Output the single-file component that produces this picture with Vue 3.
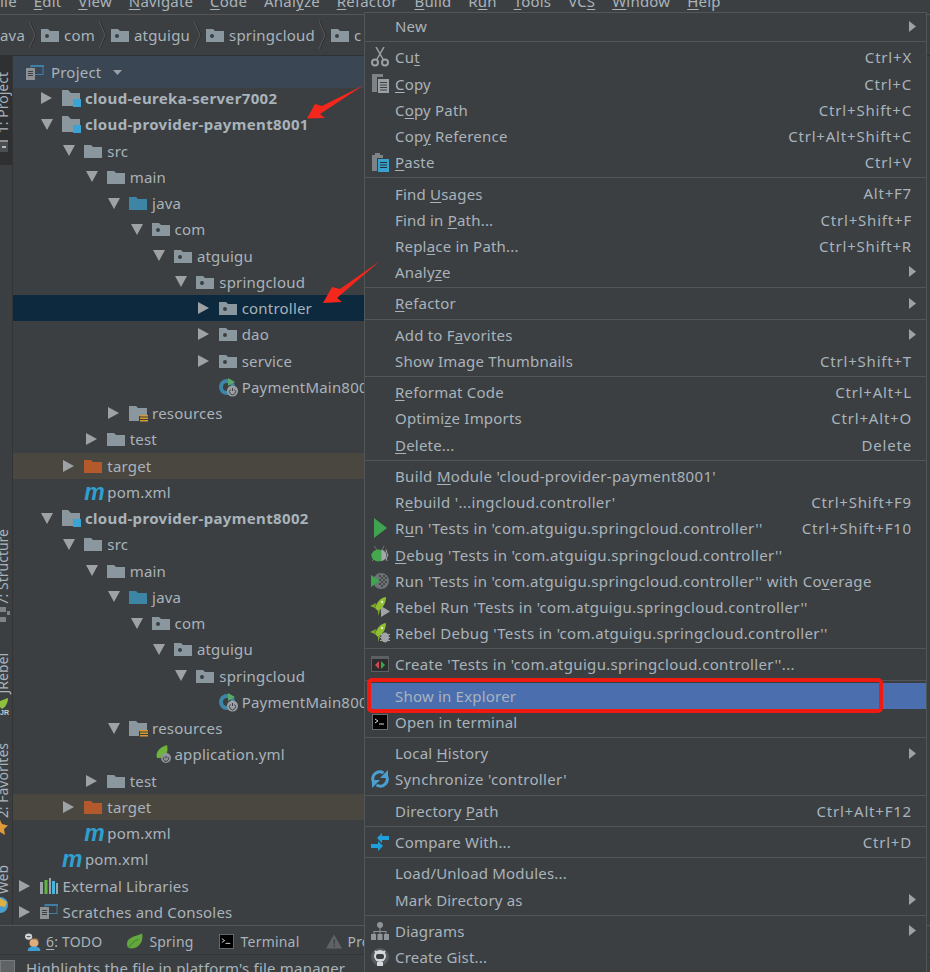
<script setup>
const menubar = [
  ['', '', 'ile'], ['', 'E', 'dit'], ['', 'V', 'iew'], ['', 'N', 'avigate'], ['', 'C', 'ode'],
  ['Anal', 'y', 'ze'], ['', 'R', 'efactor'], ['', 'B', 'uild'], ['R', 'u', 'n'], ['', 'T', 'ools'],
  ['VC', 'S', ''], ['', 'W', 'indow'], ['', 'H', 'elp'],
]
const crumbs = ['com', 'atguigu', 'springcloud', 'c']
const tree = [
  { d: 1, a: 'r', i: 'mod', t: 'cloud-eureka-server7002', b: 1 },
  { d: 1, a: 'd', i: 'mod', t: 'cloud-provider-payment8001', b: 1 },
  { d: 2, a: 'd', i: 'dir', t: 'src' },
  { d: 3, a: 'd', i: 'dir', t: 'main' },
  { d: 4, a: 'd', i: 'src', t: 'java' },
  { d: 5, a: 'd', i: 'pkg', t: 'com' },
  { d: 6, a: 'd', i: 'pkg', t: 'atguigu' },
  { d: 7, a: 'd', i: 'pkg', t: 'springcloud' },
  { d: 8, a: 'r', i: 'pkg', t: 'controller', sel: 1 },
  { d: 8, a: 'r', i: 'pkg', t: 'dao' },
  { d: 8, a: 'r', i: 'pkg', t: 'service' },
  { d: 8, a: '', i: 'boot', t: 'PaymentMain8001' },
  { d: 4, a: 'r', i: 'res', t: 'resources' },
  { d: 3, a: 'r', i: 'dir', t: 'test' },
  { d: 2, a: 'r', i: 'tgt', t: 'target', ex: 1 },
  { d: 2, a: '', i: 'm', t: 'pom.xml' },
  { d: 1, a: 'd', i: 'mod', t: 'cloud-provider-payment8002', b: 1 },
  { d: 2, a: 'd', i: 'dir', t: 'src' },
  { d: 3, a: 'd', i: 'dir', t: 'main' },
  { d: 4, a: 'd', i: 'src', t: 'java' },
  { d: 5, a: 'd', i: 'pkg', t: 'com' },
  { d: 6, a: 'd', i: 'pkg', t: 'atguigu' },
  { d: 7, a: 'd', i: 'pkg', t: 'springcloud' },
  { d: 8, a: '', i: 'boot', t: 'PaymentMain8002' },
  { d: 4, a: 'd', i: 'res', t: 'resources' },
  { d: 5, a: '', i: 'yml', t: 'application.yml' },
  { d: 3, a: 'r', i: 'dir', t: 'test' },
  { d: 2, a: 'r', i: 'tgt', t: 'target', ex: 1 },
  { d: 2, a: '', i: 'm', t: 'pom.xml' },
  { d: 1, a: '', i: 'm', t: 'pom.xml' },
  { d: 0, a: 'r', i: 'lib', t: 'External Libraries' },
  { d: 0, a: 'r', i: 'scr', t: 'Scratches and Consoles' },
]
const menu = [
  [{ p: '', u: '', s: 'New', arrow: 1 }],
  [
    { p: 'Cu', u: 't', s: '', k: 'Ctrl+X', i: 'cut' },
    { p: '', u: 'C', s: 'opy', k: 'Ctrl+C', i: 'copy' },
    { p: 'C', u: 'o', s: 'py Path', k: 'Ctrl+Shift+C' },
    { p: 'Cop', u: 'y', s: ' Reference', k: 'Ctrl+Alt+Shift+C' },
    { p: '', u: 'P', s: 'aste', k: 'Ctrl+V', i: 'paste' },
  ],
  [
    { p: 'Find ', u: 'U', s: 'sages', k: 'Alt+F7' },
    { p: 'Find in ', u: 'P', s: 'ath...', k: 'Ctrl+Shift+F' },
    { p: 'Repl', u: 'a', s: 'ce in Path...', k: 'Ctrl+Shift+R' },
    { p: 'Analy', u: 'z', s: 'e', arrow: 1 },
  ],
  [{ p: '', u: 'R', s: 'efactor', arrow: 1 }],
  [
    { p: 'Add to F', u: 'a', s: 'vorites', arrow: 1 },
    { p: 'Show Image Thumbnails', u: '', s: '', k: 'Ctrl+Shift+T' },
  ],
  [
    { p: '', u: 'R', s: 'eformat Code', k: 'Ctrl+Alt+L' },
    { p: 'Optimi', u: 'z', s: 'e Imports', k: 'Ctrl+Alt+O' },
    { p: '', u: 'D', s: 'elete...', k: 'Delete' },
  ],
  [
    { p: 'Build ', u: 'M', s: "odule 'cloud-provider-payment8001'" },
    { p: 'R', u: 'e', s: "build '...ingcloud.controller'", k: 'Ctrl+Shift+F9' },
    { p: 'R', u: 'u', s: "n 'Tests in 'com.atguigu.springcloud.controller''", k: 'Ctrl+Shift+F10', i: 'run' },
    { p: '', u: 'D', s: "ebug 'Tests in 'com.atguigu.springcloud.controller''", i: 'debug' },
    { p: "Run 'Tests in 'com.atguigu.springcloud.controller'' with Co", u: 'v', s: 'erage', i: 'cover' },
    { p: "Rebel Run 'Tests in 'com.atguigu.springcloud.controller''", u: '', s: '', i: 'rebelrun' },
    { p: "Rebel Debug 'Tests in 'com.atguigu.springcloud.controller''", u: '', s: '', i: 'rebeldebug' },
  ],
  [{ p: "Create 'Tests in 'com.atguigu.springcloud.controller''...", u: '', s: '', i: 'create' }],
  [
    { p: 'Show in Explorer', u: '', s: '', hot: 1 },
    { p: 'Open in terminal', u: '', s: '', i: 'term' },
  ],
  [
    { p: 'Local ', u: 'H', s: 'istory', arrow: 1 },
    { p: "Synchronize 'controller'", u: '', s: '', i: 'sync', long: 1 },
  ],
  [{ p: 'Directory ', u: 'P', s: 'ath', k: 'Ctrl+Alt+F12' }],
  [{ p: 'Compare With...', u: '', s: '', k: 'Ctrl+D', i: 'compare' }],
  [
    { p: 'Load/Unload Modules...', u: '', s: '' },
    { p: 'Mark Directory as', u: '', s: '', arrow: 1 },
  ],
  [
    { p: 'Diagrams', u: '', s: '', arrow: 1, i: 'diagram' },
    { p: 'Create Gist...', u: '', s: '', i: 'gist' },
  ],
]
const isLong = (m) => m.long || (m.p + m.s).length > 30
</script>

<template>
  <div class="ide">
    <div class="menubar">
      <span v-for="(m, i) in menubar" :key="i" class="mb-item">{{ m[0] }}<u>{{ m[1] }}</u>{{ m[2] }}</span>
    </div>

    <div class="crumbs">
      <span class="crumb first">ava</span>
      <template v-for="c in crumbs" :key="c">
        <svg class="chev" width="8" height="40" viewBox="0 0 8 40"><path d="M1 6 L7 20 L1 34" fill="none" stroke="#2b2d2e" stroke-width="1" /><path d="M0 6 L6 20 L0 34" fill="none" stroke="#55585a" stroke-width="1" /></svg>
        <span class="crumb">
          <svg width="18" height="14" viewBox="0 0 18 14"><path d="M0 1h7l2 2h9v11H0z" fill="#8b979f" /><circle cx="6" cy="8" r="2" fill="#3c3f41" /></svg>
          {{ c }}
        </span>
      </template>
    </div>

    <div class="body">
      <aside class="rail">
        <div class="rail-active">
          <span class="vtext vt-project"><u>1</u>: Project</span>
          <svg class="rail-ico" width="8" height="12" viewBox="0 0 8 12"><path d="M0 0h8v12H0z" fill="#4b4e50" /><path d="M0 0h8v2H0z" fill="#8a8e91" /><path d="M2 6h4v2H2z" fill="#b5b9bc" /></svg>
        </div>
        <span class="vtext vt-structure"><u>7</u>: Structure</span>
        <svg class="rail-struct" width="10" height="16" viewBox="0 0 10 16"><path d="M0 0h6v5H0zM0 10h6v5H0zM7 4h3v4H7z" fill="#7d8387" /></svg>
        <span class="vtext vt-rebel">JRebel</span>
        <svg class="rail-rocket" width="12" height="18" viewBox="0 0 12 18"><path d="M8 0 C8 4 6 9 2 11 L0 9 V3 C3 2 5 1 8 0z" fill="#8fbf3f" /><text x="0" y="17" font-size="7" font-weight="700" fill="#c8cdd0" font-family="Liberation Sans">JR</text></svg>
        <span class="vtext vt-fav"><u>2</u>: Favorites</span>
        <svg class="rail-star" width="8" height="16" viewBox="0 0 8 16"><path d="M0 0 L2 4 L8 5.500 L4 9 L5 15 L0 12z" fill="#e09a3a" /></svg>
        <span class="vtext vt-web">Web</span>
        <svg class="rail-globe" width="8" height="16" viewBox="0 0 8 16"><circle cx="0" cy="8" r="8" fill="#4a9fd0" /><path d="M0 1 L7 5 L5 10 L0 9z" fill="#e0b040" /></svg>
      </aside>

      <section class="project">
        <header class="proj-head">
          <svg class="ph-ico" width="18" height="15" viewBox="0 0 18 15"><rect x="5" y="0.5" width="12" height="9" fill="none" stroke="#3c7fa8" /><path d="M5 0h13v2H5z" fill="#3c7fa8" /><path d="M0 3h9v12H0z" fill="#8b9194" /><path d="M2 6h5v1H2zM2 8h5v1H2zM2 10h5v1H2z" fill="#3c3f41" /></svg>
          <span class="ph-title">Project</span>
          <svg class="ph-caret" width="9" height="5" viewBox="0 0 9 5"><path d="M0 0h9L4.500 5z" fill="#9aa0a4" /></svg>
        </header>

        <div class="tree">
          <div
            v-for="(r, i) in tree"
            :key="i"
            class="row"
            :class="{ sel: r.sel, ex: r.ex }"
          >
            <span class="indent" :style="{ width: (r.d * 22.4) + 'px' }"></span>
            <span class="arrow">
              <svg v-if="r.a === 'r'" width="11" height="12" viewBox="0 0 11 12"><path d="M0 0 L11 6 L0 12z" fill="#9ea2a5" /></svg>
              <svg v-else-if="r.a === 'd'" width="12" height="11" viewBox="0 0 12 11"><path d="M0 0 H12 L6 11z" fill="#9ea2a5" /></svg>
            </span>
            <span class="ico">
              <svg v-if="r.i === 'mod'" width="19" height="18" viewBox="0 0 19 18"><path d="M0 1h6l3 3h9v6h-7v7H0z" fill="#8b979f" /><rect x="11" y="10" width="8" height="8" fill="#3aa5d5" /></svg>
              <svg v-else-if="r.i === 'dir'" width="18" height="14" viewBox="0 0 18 14"><path d="M0 1h7l2 2h9v11H0z" fill="#8b979f" /></svg>
              <svg v-else-if="r.i === 'src'" width="18" height="14" viewBox="0 0 18 14"><path d="M0 1h7l2 2h9v11H0z" fill="#3d85a5" /></svg>
              <svg v-else-if="r.i === 'tgt'" width="18" height="14" viewBox="0 0 18 14"><path d="M0 1h7l2 2h9v11H0z" fill="#b4592b" /></svg>
              <svg v-else-if="r.i === 'pkg'" width="18" height="14" viewBox="0 0 18 14"><path d="M0 1h7l2 2h9v11H0z" fill="#8b979f" /><circle cx="6" cy="8" r="2" fill="#3c3f41" /></svg>
              <svg v-else-if="r.i === 'res'" width="19" height="17" viewBox="0 0 19 17"><path d="M0 1h7l2 2h9v8h-8v5H0z" fill="#8b979f" /><path d="M11 10h8v1.500h-8zM11 12.500h8v1.500h-8zM11 15h8v1.500h-8z" fill="#d69a2d" /></svg>
              <svg v-else-if="r.i === 'boot'" width="20" height="20" viewBox="0 0 20 20"><circle cx="8" cy="10" r="8" fill="#3c86a8" /><circle cx="8" cy="10" r="4" fill="#3c3f41" /><path d="M9 1 L16 5 L9 9z" fill="#59a869" /><circle cx="13.500" cy="14" r="5.500" fill="#9aa0a4" /><path d="M13.500 11v3M11.500 12.500a3 3 0 1 0 4 0" fill="none" stroke="#3c3f41" stroke-width="1" /></svg>
              <svg v-else-if="r.i === 'yml'" width="20" height="20" viewBox="0 0 20 20"><path d="M15 1 C17 9 13 15 5 14 C3 8 8 3 15 1z" fill="#6fb33f" /><circle cx="14" cy="14" r="5" fill="#8f9498" /><path d="M14 12v2.500M12.200 12.800a2.600 2.600 0 1 0 3.600 0" fill="none" stroke="#3c3f41" /></svg>
              <span v-else-if="r.i === 'm'" class="m-ico">m</span>
              <svg v-else-if="r.i === 'lib'" width="18" height="16" viewBox="0 0 18 16"><path d="M0 4h3v12H0z" fill="#9aa5a8" /><path d="M4.500 2h3v14h-3z" fill="#62b543" /><path d="M9 0h2v16H9z" fill="#9aa5a8" /><path d="M12 3h3v13h-3z" fill="#40b6e0" /><path d="M16 5h2v11h-2z" fill="#9aa5a8" /></svg>
              <svg v-else width="18" height="15" viewBox="0 0 18 15"><rect x="5" y="0.500" width="12" height="9" fill="none" stroke="#3c7fa8" /><path d="M5 0h13v2H5z" fill="#3c7fa8" /><path d="M0 3h9v12H0z" fill="#8b9194" /><path d="M2 6h5v1H2zM2 8h5v1H2zM2 10h5v1H2z" fill="#3c3f41" /></svg>
            </span>
            <span class="label" :class="{ bold: r.b }">{{ r.t }}</span>
          </div>
        </div>
      </section>
    </div>

    <div class="toolbar">
      <span class="tool tool-todo">
        <svg width="18" height="20" viewBox="0 0 20 20"><circle cx="10" cy="11" r="5" fill="#e0ac7a" /><path d="M3 20c0-4 3-5 7-5s7 1 7 5z" fill="#3f9fd4" /><path d="M4 9c0-5 12-5 12 0l-2-2H6z" fill="#6b5a47" /><ellipse cx="4" cy="4" rx="4" ry="3.500" fill="#d0d3d5" /><path d="M2 4h4" stroke="#3c3f41" /></svg>
        <span><u>6</u>: TODO</span>
      </span>
      <span class="tool tool-spring">
        <svg width="16" height="17" viewBox="0 0 17 17"><path d="M16 0 C18 9 12 16 4 16 C1 16 0 14 0 11 C0 4 9 3 16 0z" fill="#62a83d" /><path d="M2 15 C5 10 8 8 12 6" fill="none" stroke="#3c7a27" /></svg>
        <span>Spring</span>
      </span>
      <span class="tool tool-term">
        <svg width="15" height="15" viewBox="0 0 16 16"><rect width="16" height="16" fill="#6b6e70" /><rect x="1" y="1" width="14" height="14" fill="#000" /><path d="M3 5l3 2-3 2" fill="none" stroke="#d8d8d8" /><path d="M7 10h5" stroke="#d8d8d8" /></svg>
        <span>Terminal</span>
      </span>
      <span class="tool tool-prob">
        <svg width="16" height="15" viewBox="0 0 17 15"><path d="M8.500 0 L17 15 H0z" fill="#606365" /><path d="M8 5h1.500v5H8zM8 11h1.500v2H8z" fill="#3c3f41" /></svg>
        <span>Problems</span>
      </span>
    </div>

    <footer class="status">
      <span class="st-box"></span>
      <span class="st-text">Highlights the file in platform's file manager</span>
    </footer>

    <nav class="menu">
      <div v-for="(g, gi) in menu" :key="gi" class="group">
        <div v-for="(m, mi) in g" :key="mi" class="item" :class="{ hot: m.hot }">
          <span class="mi">
            <svg v-if="m.i === 'cut'" width="18" height="20" viewBox="0 0 18 20"><circle cx="4" cy="15.500" r="3" fill="none" stroke="#9aa0a4" stroke-width="2" /><circle cx="14" cy="15.500" r="3" fill="none" stroke="#9aa0a4" stroke-width="2" /><path d="M5.500 13 L13 0 M12.500 13 L5 0" stroke="#9aa0a4" stroke-width="1.500" /></svg>
            <svg v-else-if="m.i === 'copy'" width="18" height="19" viewBox="0 0 18 19"><path d="M1 0h11v3H6v15H1z" fill="#7d8386" /><path d="M7 5h11v14H7z" fill="#9aa0a4" /><path d="M9 8h7v1H9zM9 10.500h7v1H9zM9 13h7v1H9zM9 15.500h7v1H9z" fill="#3c3f41" /></svg>
            <svg v-else-if="m.i === 'paste'" width="18" height="19" viewBox="0 0 18 19"><path d="M1 2h3V0h5v2h3v3H6v13H1z" fill="#7d8386" /><path d="M7 6h11v13H7z" fill="#3aa0cc" /><path d="M9 9h7v1H9zM9 11.500h7v1H9zM9 14h7v1H9z" fill="#20303a" /></svg>
            <svg v-else-if="m.i === 'run'" width="13" height="20" viewBox="0 0 13 20"><path d="M0 0 L13 10 L0 20z" fill="#3ea44f" /></svg>
            <svg v-else-if="m.i === 'debug'" width="18" height="18" viewBox="0 0 18 18"><path d="M3 0l3 4M13 0l-2 4M0 9h2M16 9h2M1 15l3-3M17 15l-3-3" stroke="#70757a" /><path d="M15 3.500 Q18 9 15 14.500" fill="none" stroke="#a4a8ab" /><ellipse cx="7.500" cy="9.500" rx="7" ry="6" fill="#46a84e" /><path d="M10.500 3.800a7 6 0 0 1 0 11.400z" fill="#a4a8ab" /></svg>
            <svg v-else-if="m.i === 'cover'" width="18" height="18" viewBox="0 0 18 18"><circle cx="10" cy="9" r="8" fill="#6e7376" /><path d="M4 3h1v1H4zM8 3h2v2H8zM12 3h2v2h-2zM10 5h2v2h-2zM14 5h2v2h-2zM8 7h2v2H8zM12 7h2v2h-2zM10 9h2v2h-2zM14 9h2v2h-2zM8 11h2v2H8zM12 11h2v2h-2zM10 13h2v2h-2z" fill="#45484a" /><path d="M0 3 L9 9 L0 15z" fill="#3ea44f" /></svg>
            <svg v-else-if="m.i === 'rebelrun' || m.i === 'rebeldebug'" width="20" height="20" viewBox="0 0 20 20"><path d="M16 0 C16 6 13 11 8 14 L5 11 C7 5 10 1 16 0z" fill="#8fbf30" /><path d="M6 6 L0 9 L5 11zM8 14 L8 19 L11 11z" fill="#7fa826" /><circle cx="12" cy="5" r="1.200" fill="#dfe8c8" /><path v-if="m.i === 'rebelrun'" d="M11 9 L20 14.500 L11 20z" fill="#a0a4a8" /><g v-else fill="#a0a4a8"><ellipse cx="15" cy="14.500" rx="4" ry="5" /><path d="M10 11h10v1h-10zM10 14h10v1h-10zM10 17h10v1h-10z" /></g></svg>
            <svg v-else-if="m.i === 'create'" width="18" height="16" viewBox="0 0 18 16"><rect width="18" height="16" fill="#5c6063" /><rect x="1" y="3" width="16" height="12" fill="#2b2d2e" /><path d="M8 5 L4 9 L8 13z" fill="#d04b4b" /><path d="M10 5 L14 9 L10 13z" fill="#3ea44f" /></svg>
            <svg v-else-if="m.i === 'term'" width="16" height="16" viewBox="0 0 16 16"><rect width="16" height="16" fill="#6b6e70" /><rect x="1" y="1" width="14" height="14" fill="#000" /><path d="M3 5l3 2-3 2" fill="none" stroke="#d8d8d8" /><path d="M7 10h5" stroke="#d8d8d8" /></svg>
            <svg v-else-if="m.i === 'sync'" width="18" height="18" viewBox="0 0 18 18"><path d="M2.500 12 A7 7 0 0 1 12.500 3 M15.500 6 A7 7 0 0 1 5.500 15" fill="none" stroke="#4a9fd0" stroke-width="3" /><path d="M17 0V8H9zM1 18V10H9z" fill="#4a9fd0" /></svg>
            <svg v-else-if="m.i === 'compare'" width="18" height="18" viewBox="0 0 18 18"><path d="M11 0 V3 H18 V7 H11 V10 L6 5z" fill="#1f9fdc" /><path d="M7 8 V11 H0 V15 H7 V18 L12 13z" fill="#1f9fdc" /></svg>
            <svg v-else-if="m.i === 'diagram'" width="18" height="18" viewBox="0 0 18 18"><circle cx="9" cy="3" r="3" fill="#8f9498" /><path d="M8.500 5h1v4h-1zM2.500 9h13v1h-13zM2.500 9h1v3h-1zM8.500 9h1v3h-1zM14.500 9h1v3h-1z" fill="#8f9498" /><path d="M0 12h5v6H0zM6.500 12h5v6h-5zM13 12h5v6h-5z" fill="#8f9498" /></svg>
            <svg v-else-if="m.i === 'gist'" width="18" height="18" viewBox="0 0 18 18"><circle cx="9" cy="9" r="9" fill="#56595b" /><circle cx="9" cy="8" r="6" fill="#d6d8d9" /><path d="M4 3l2 2M14 3l-2 2" stroke="#d6d8d9" stroke-width="2" /><rect x="5" y="6" width="8" height="5" rx="2" fill="#3c3f41" /><path d="M6 14h6v4H6z" fill="#d6d8d9" /></svg>
          </span>
          <span class="lbl" :class="{ long: isLong(m) }">{{ m.p }}<u v-if="m.u">{{ m.u }}</u>{{ m.s }}</span>
          <span v-if="m.k" class="key">{{ m.k }}</span>
          <svg v-if="m.arrow" class="sub" width="7" height="11" viewBox="0 0 7 11"><path d="M0 0 L7 5.500 L0 11z" fill="#9ea2a5" /></svg>
        </div>
      </div>
    </nav>

    <div class="redbox"></div>
    <svg class="redarrow a1" width="60" height="44" viewBox="0 0 60 44"><path d="M59 0 L17 21 L10 19 L2 33.500 L20 33 L15 29z" fill="#f5261c" /></svg>
    <svg class="redarrow a2" width="62" height="48" viewBox="0 0 62 48"><path d="M61 1 L21 29 L13 27 L4 43 L23 42 L18 38z" fill="#f5261c" /></svg>
  </div>
</template>

<style>
html, body { margin: 0; background: #3c3f41; }
</style>

<style scoped>
.ide {
  position: relative;
  width: 930px;
  height: 972px;
  overflow: hidden;
  background: #3c3f41;
  color: #a9b3bb;
  font-family: "Noto Sans", "Open Sans", sans-serif;
  font-size: 15px;
  letter-spacing: 0.2px;
  display: flex;
  flex-direction: column;
}
u { text-underline-offset: 2px; text-decoration-thickness: 1px; }

.menubar {
  height: 15px;
  flex: none;
  overflow: hidden;
  display: flex;
  gap: 16.9px;
  line-height: 26px;
  border-bottom: 1px solid #555758;
  box-sizing: border-box;
}
.mb-item { flex: none; height: 26px; margin-top: -12px; }

.crumbs {
  height: 41px;
  flex: none;
  display: flex;
  align-items: center;
  gap: 4px;
  border-bottom: 1px solid #2f3132;
  box-sizing: border-box;
}
.crumb { display: inline-flex; align-items: center; gap: 5px; }

.body { flex: 1; min-height: 0; display: flex; border-bottom: 1px solid #555758; }
.rail {
  position: relative;
  width: 12px;
  flex: none;
  border-right: 1px solid #323435;
  overflow: hidden;
  letter-spacing: 0;
}
.rail-active { position: absolute; left: 0; top: 0; width: 12px; height: 109px; background: #2e3031; }
.vtext {
  position: absolute;
  left: -4px;
  writing-mode: vertical-rl;
  transform: rotate(180deg);
  font-size: 14px;
  line-height: 14px;
  white-space: nowrap;
}
.vt-project { top: 16px; }
.rail-ico { position: absolute; left: 0; top: 84px; }
.vt-structure { top: 473px; }
.rail-struct { position: absolute; left: 0; top: 551px; }
.vt-rebel { top: 597px; }
.rail-rocket { position: absolute; left: 0; top: 642px; }
.vt-fav { top: 687px; }
.rail-star { position: absolute; left: 0; top: 764px; }
.vt-web { top: 809px; }
.rail-globe { position: absolute; left: 0; top: 841px; }

.project { flex: none; width: 352px; display: flex; flex-direction: column; overflow: hidden; }
.proj-head {
  height: 32px;
  flex: none;
  background: #3b4654;
  display: flex;
  align-items: center;
  padding-left: 13px;
}
.ph-title { margin-left: 7px; }
.ph-caret { margin-left: 12px; }
.tree { flex: 1; min-height: 0; margin-top: -3px; }
.row { height: 26.25px; display: flex; align-items: center; white-space: nowrap; padding-left: 4.5px; }
.row.sel { background: #0d293e; }
.row.ex { background: #4a4740; }
.indent { flex: none; }
.arrow { width: 22px; flex: none; display: flex; align-items: center; padding-left: 1px; box-sizing: border-box; }
.ico { width: 23px; flex: none; display: flex; align-items: center; }
.label { line-height: 20px; }
.bold { font-weight: 700; letter-spacing: 0.35px; }
.m-ico {
  font-family: "Liberation Sans", sans-serif;
  font-style: italic;
  font-weight: 700;
  font-size: 23px;
  line-height: 20px;
  color: #2f9fd0;
}

.toolbar {
  height: 29px;
  flex: none;
  display: flex;
  align-items: center;
  padding-top: 3px;
  border-bottom: 1px solid #323435;
  box-sizing: border-box;
  font-size: 14px;
}
.tool { display: inline-flex; align-items: center; white-space: nowrap; flex: none; }
.tool-todo { margin-left: 25px; gap: 3px; }
.tool-spring { margin-left: 25px; gap: 6px; }
.tool-term { margin-left: 25px; gap: 7px; }
.tool-prob { margin-left: 27px; gap: 5px; }

.status { height: 17px; flex: none; overflow: hidden; display: flex; gap: 11px; align-items: flex-start; }
.st-box { width: 13px; height: 17px; margin-top: 5px; border: 1px solid #787a7c; background: #606365; flex: none; }
.st-text { line-height: 20px; margin-top: 3px; white-space: nowrap; }

.menu {
  position: absolute;
  left: 364px;
  top: 12px;
  width: 563px;
  bottom: -10px;
  background: #3c3f41;
  border-left: 1px solid #515658;
  border-right: 1px solid #515658;
  border-top: 1px solid #515658;
  box-sizing: border-box;
}
.group + .group { border-top: 1px solid #515658; margin-top: 2.15px; padding-top: 2px; }
.item { position: relative; height: 26.2px; display: flex; align-items: center; white-space: nowrap; }
.item.hot { background: #4b6eaf; margin-left: 3px; }
.item.hot .mi { width: 27px; }
.mi { width: 30px; flex: none; display: flex; align-items: center; justify-content: center; }
.lbl { flex: 1; }
.lbl.long { letter-spacing: 0.33px; }
.key { position: absolute; right: 14px; top: 0; line-height: 26px; letter-spacing: 0.8px; }
.sub { position: absolute; right: 10px; top: 7.500px; }

.redbox {
  position: absolute;
  left: 367px;
  top: 678px;
  width: 516px;
  height: 35px;
  box-sizing: border-box;
  border: 4px solid #f01a10;
  border-radius: 5px;
}
.redarrow { position: absolute; }
.a1 { left: 305px; top: 85px; }
.a2 { left: 319px; top: 260px; }
</style>
